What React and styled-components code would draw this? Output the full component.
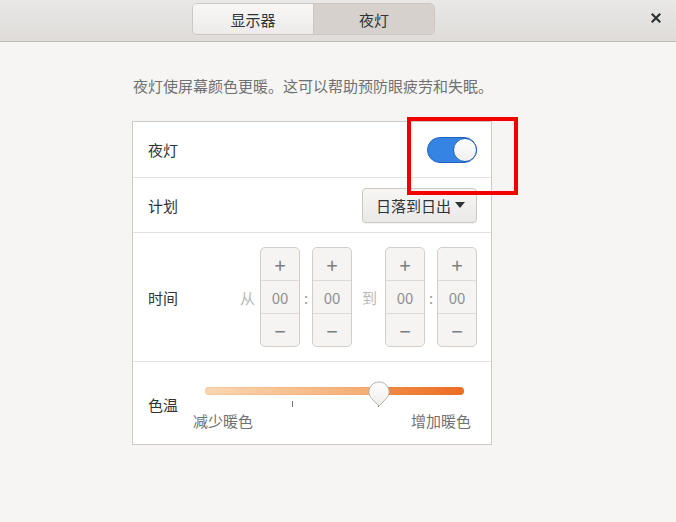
import React from 'react';
import styled, { createGlobalStyle } from 'styled-components';

const GlobalStyle = createGlobalStyle`
    html, body {
        margin: 0;
        padding: 0;
        background: #f6f5f4;
    }
    body {
        font-family: "Noto Sans CJK SC", "Noto Sans", sans-serif;
        color: #2e3436;
    }
`;

const Window = styled.div`
    position: relative;
    width: 676px;
    height: 522px;
    background: #f6f5f4;
    overflow: hidden;
`;

const HeaderBar = styled.div`
    display: flex;
    align-items: flex-start;
    height: 42px;
    box-sizing: border-box;
    padding: 3px 0 0 192px;
    background: linear-gradient(to bottom, #e9e8e6, #dfdcd9);
    border-bottom: 1px solid #c0bab4;
`;

const TabGroup = styled.div`
    display: flex;
    height: 32px;
    border: 1px solid #cdc7c2;
    border-radius: 5px;
    overflow: hidden;
    box-sizing: border-box;
`;

const Tab = styled.div`
    display: flex;
    align-items: center;
    justify-content: center;
    width: ${p => p.$w}px;
    font-size: 15px;
    color: #2e3436;
    background: ${p => p.$active
        ? '#d6d1cd'
        : 'linear-gradient(to bottom, #f8f7f6, #edebe9)'};
    & + & {
        border-left: 1px solid #cdc7c2;
    }
`;

const CloseButton = styled.div`
    margin-left: auto;
    margin-right: 12px;
    margin-top: 7px;
    width: 16px;
    height: 16px;
    display: flex;
    align-items: center;
    justify-content: center;
`;

const Content = styled.div`
    width: 360px;
    margin: 0 0 0 132px;
    padding-top: 33px;
`;

const Description = styled.p`
    margin: 0 0 24px 1px;
    font-size: 15px;
    line-height: 22px;
    color: #6f7172;
    white-space: nowrap;
`;

const Card = styled.div`
    background: #ffffff;
    border: 1px solid #cfcac5;
`;

const Row = styled.div`
    display: flex;
    align-items: center;
    height: ${p => p.$h}px;
    box-sizing: border-box;
    padding: 0 14px 0 15px;
    & + & {
        border-top: 1px solid #e4e2df;
    }
`;

const Label = styled.div`
    font-size: 15px;
    color: #2e3436;
    margin-top: ${p => p.$dy || 0}px;
`;

const Switch = styled.div`
    margin-left: auto;
    width: 50px;
    height: 26px;
    box-sizing: border-box;
    border-radius: 13px;
    background: #3584e4;
    border: 1px solid #1f63be;
    display: flex;
    justify-content: flex-end;
    align-items: center;
`;

const SwitchKnob = styled.div`
    width: 24px;
    height: 24px;
    border-radius: 50%;
    box-sizing: border-box;
    background: linear-gradient(to bottom, #ffffff, #f0efee);
    border: 1px solid #1f63be;
    margin-right: -1px;
`;

const ComboButton = styled.div`
    margin-left: auto;
    display: flex;
    align-items: center;
    gap: 4px;
    height: 35px;
    box-sizing: border-box;
    padding: 0 11px 0 13px;
    border: 1px solid #cdc7c2;
    border-radius: 4px;
    background: linear-gradient(to bottom, #f7f6f5, #ebe9e7);
    box-shadow: 0 1px 0 rgba(0, 0, 0, 0.05);
    font-size: 15px;
    color: #2e3436;
`;

const TimeGroup = styled.div`
    margin-left: auto;
    display: flex;
    align-items: center;
`;

const Word = styled.span`
    font-size: 15px;
    color: #b8b9ba;
    margin: ${p => p.$m};
`;

const Colon = styled.span`
    width: 12px;
    text-align: center;
    font-size: 15px;
    color: #9a9c9d;
`;

const Spinner = styled.div`
    display: flex;
    flex-direction: column;
    width: 40px;
    height: 100px;
    box-sizing: border-box;
    border: 1px solid #d3cec9;
    border-radius: 5px;
    background: #f5f4f3;
    overflow: hidden;
`;

const SpinCell = styled.div`
    flex: 1;
    display: flex;
    align-items: center;
    justify-content: center;
    font-size: ${p => (p.$sign ? 20 : 15)}px;
    color: ${p => (p.$sign ? '#7c7f80' : '#8d9091')};
    & + & {
        border-top: 1px solid #dedad6;
    }
`;

const Slider = styled.div`
    margin-left: 15px;
    width: 278px;
    margin-top: 3px;
`;

const TroughArea = styled.div`
    position: relative;
    height: 32px;
    padding: 8px 7px 0 12px;
    box-sizing: border-box;
`;

const Trough = styled.div`
    height: 8px;
    border-radius: 4px;
    background: linear-gradient(
        to right,
        #fad7b2 0%,
        #f4aa70 66.8%,
        #f08e4a 66.8%,
        #ec6c22 100%
    );
    box-shadow: inset 0 0 0 1px rgba(220, 120, 50, 0.15);
`;

const Tick = styled.div`
    position: absolute;
    top: 22px;
    left: ${p => p.$x}px;
    width: 1px;
    height: 6px;
    background: #6f7172;
`;

const Knob = styled.svg`
    position: absolute;
    top: 2px;
    left: 175px;
`;

const SliderLabels = styled.div`
    display: flex;
    justify-content: space-between;
    font-size: 15px;
    color: #6f7172;
    line-height: 20px;
`;

const Highlight = styled.div`
    position: absolute;
    left: 407px;
    top: 117px;
    width: 111px;
    height: 78px;
    box-sizing: border-box;
    border: 4px solid #f20000;
`;

function TimeSpinner({ value }) {
    return (
        <Spinner>
            <SpinCell $sign>+</SpinCell>
            <SpinCell>{value}</SpinCell>
            <SpinCell $sign>−</SpinCell>
        </Spinner>
    );
}

export default function App() {
    return (
        <Window>
            <GlobalStyle />
            <HeaderBar>
                <TabGroup>
                    <Tab $w={120}>显示器</Tab>
                    <Tab $w={120} $active>夜灯</Tab>
                </TabGroup>
                <CloseButton>
                    <svg width="10" height="10" viewBox="0 0 10 10">
                        <path d="M1.5 1.5 L8.5 8.5 M8.5 1.5 L1.5 8.5" stroke="#2e3436" strokeWidth="2.2" strokeLinecap="square" />
                    </svg>
                </CloseButton>
            </HeaderBar>

            <Content>
                <Description>夜灯使屏幕颜色更暖。这可以帮助预防眼疲劳和失眠。</Description>
                <Card>
                    <Row $h={55}>
                        <Label>夜灯</Label>
                        <Switch>
                            <SwitchKnob />
                        </Switch>
                    </Row>
                    <Row $h={55}>
                        <Label>计划</Label>
                        <ComboButton>
                            日落到日出
                            <svg width="10" height="7" viewBox="0 0 10 7">
                                <path d="M0 0 L10 0 L5 6 Z" fill="#2e3436" />
                            </svg>
                        </ComboButton>
                    </Row>
                    <Row $h={129}>
                        <Label>时间</Label>
                        <TimeGroup>
                            <Word $m="0 5px 0 0">从</Word>
                            <TimeSpinner value="00" />
                            <Colon>:</Colon>
                            <TimeSpinner value="00" />
                            <Word $m="0 8px 0 10px">到</Word>
                            <TimeSpinner value="00" />
                            <Colon>:</Colon>
                            <TimeSpinner value="00" />
                        </TimeGroup>
                    </Row>
                    <Row $h={83}>
                        <Label $dy={2}>色温</Label>
                        <Slider>
                            <TroughArea>
                                <Trough />
                                <Tick $x={99} />
                                <Tick $x={185} />
                                <Knob width="22" height="26" viewBox="0 0 22 26">
                                    <defs>
                                        <linearGradient id="knobFill" x1="0" y1="0" x2="0" y2="1">
                                            <stop offset="0" stopColor="#ffffff" />
                                            <stop offset="1" stopColor="#eeecea" />
                                        </linearGradient>
                                    </defs>
                                    <path
                                        d="M11 1 A10 10 0 0 1 19.2 16.7 L11 25 L2.8 16.7 A10 10 0 0 1 11 1 Z"
                                        fill="url(#knobFill)"
                                        stroke="#b9b2ac"
                                        strokeWidth="1"
                                    />
                                </Knob>
                            </TroughArea>
                            <SliderLabels>
                                <span>减少暖色</span>
                                <span>增加暖色</span>
                            </SliderLabels>
                        </Slider>
                    </Row>
                </Card>
            </Content>

            <Highlight />
        </Window>
    );
}
